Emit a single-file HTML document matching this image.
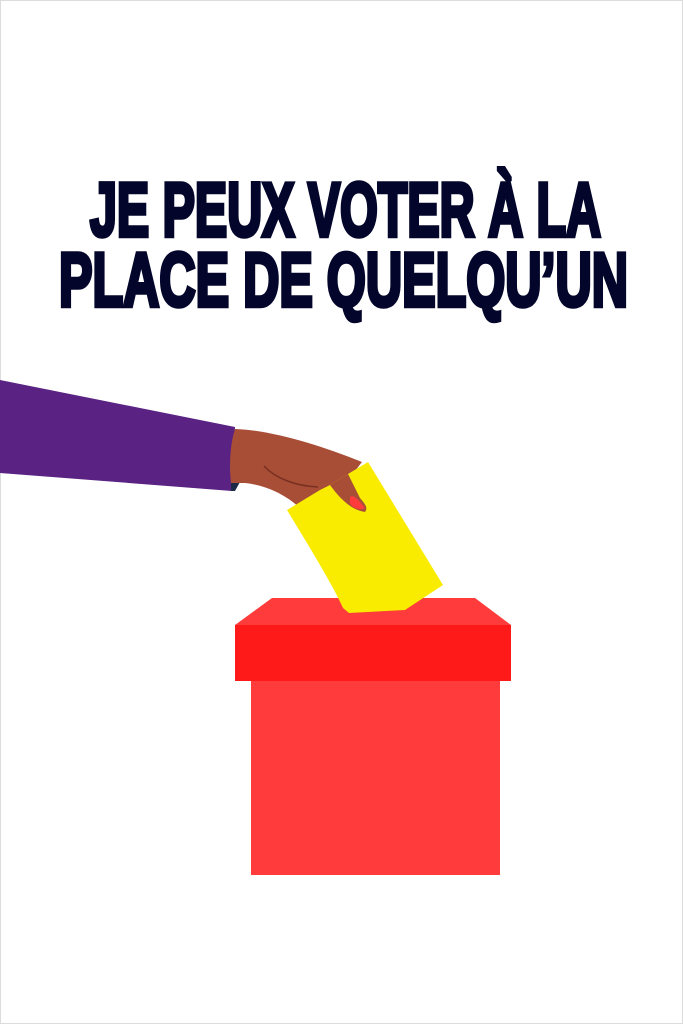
<!DOCTYPE html>
<html><head><meta charset="utf-8"><style>
html,body{margin:0;padding:0;background:#fff}
body{width:683px;height:1024px;overflow:hidden}
.frame{position:absolute;left:0;top:0;width:681px;height:1022px;border:1px solid #dcdcdc}
</style></head><body>
<div class="frame"></div>
<svg width="683" height="1024" viewBox="0 0 683 1024" style="position:absolute;left:0;top:0">
<g font-family="'Liberation Sans Narrow','Liberation Sans',sans-serif" font-weight="bold" fill="#03062a" stroke="#03062a" stroke-width="4.5" stroke-linejoin="miter" font-size="76">
<text x="90" y="236" textLength="511" lengthAdjust="spacingAndGlyphs">JE PEUX VOTER À LA</text>
<text x="59" y="306" textLength="569" lengthAdjust="spacingAndGlyphs">PLACE DE QUELQU’UN</text>
</g>
<!-- box -->
<polygon points="272,598 475,598 511,625 235,625" fill="#ff3b3b"/>
<rect x="235" y="625" width="276" height="56" fill="#ff1a1a"/>
<rect x="251" y="681" width="249" height="194" fill="#ff3b3b"/>
<!-- sleeve -->
<polygon points="0,380 235,427 232,491 0,473" fill="#5a2282"/>
<path d="M231,483 L240,482 L235,491 L231,491Z" fill="#1c2a4a"/>
<!-- hand -->
<path d="M235,429 C270,430 320,445 362,462 L348,480 L365,510 C350,515 335,505 325,495 L300,508 C285,494 265,485 245,483 L231,483 C229,465 230,445 235,429Z" fill="#a84e37"/>
<!-- ballot -->
<path d="M287,510 L320,490 L330,485 L348,474 L368,462 L443,585 L405,610 L349,613 L343,608 C335,590 320,565 310,548 Z" fill="#f9ec00"/>
<!-- thumb over ballot -->
<path d="M330,485 C338,496 350,510 365,512 C368,508 366,505 360,498 L348,474Z" fill="#a84e37"/>
<path d="M350,497 C354,494 358,500 365,508 C360,511 352,508 350,503Z" fill="#ff3b3b"/>
<path d="M264,466 C275,478 295,486 318,487" stroke="#7a3020" stroke-width="1.5" fill="none"/>
</svg>
</body></html>
